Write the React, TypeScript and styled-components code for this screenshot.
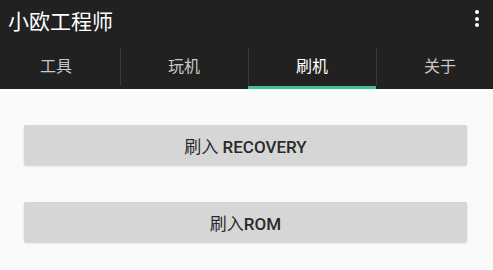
import React from 'react'
import styled, { createGlobalStyle } from 'styled-components'

const GlobalStyle = createGlobalStyle`
  html, body {
    margin: 0;
    padding: 0;
    background: #fafafa;
  }
  body {
    font-family: Roboto, "Noto Sans CJK SC", sans-serif;
  }
`

const tabs = ['工具', '玩机', '刷机', '关于']

const App = () => {
  const [active, setActive] = React.useState<number>(2)

  return (
    <Page>
      <GlobalStyle />
      <Header>
        <Toolbar>
          <Title>小欧工程师</Title>
          <Menu aria-label="更多">
            <Dot />
            <Dot />
            <Dot />
          </Menu>
        </Toolbar>
        <TabScroller>
          <TabBar>
            {tabs.map((t, i) => (
              <Tab key={t} active={i === active} divider={i > 0} onClick={() => setActive(i)}>
                {t}
              </Tab>
            ))}
          </TabBar>
        </TabScroller>
      </Header>

      <Content>
        <FlashButton>
          <Cjk>刷入</Cjk> RECOVERY
        </FlashButton>
        <FlashButton>
          <Cjk>刷入</Cjk>ROM
        </FlashButton>
      </Content>
    </Page>
  )
}

export default App

const Page = styled.div`
  width: 100%;
  min-height: 100vh;
  background: #fafafa;
`

const Header = styled.div`
  background: #212121;
`

const Toolbar = styled.div`
  height: 44px;
  display: flex;
  align-items: center;
  justify-content: space-between;
  padding: 0 14px 0 8px;
`

const Title = styled.div`
  color: #ffffff;
  font-size: 21px;
  margin-top: -4px;
`

const Menu = styled.div`
  display: flex;
  flex-direction: column;
  gap: 2.5px;
  margin-top: -7px;
  cursor: pointer;
`

const Dot = styled.span`
  width: 4px;
  height: 4px;
  border-radius: 50%;
  background: #ffffff;
`

const TabScroller = styled.div`
  overflow: hidden;
`

const TabBar = styled.div`
  height: 45px;
  margin-left: -8px;
  display: grid;
  grid-template-columns: repeat(4, 128px);
`

const Tab = styled.div<{ active: boolean; divider: boolean }>`
  position: relative;
  display: flex;
  align-items: center;
  justify-content: center;
  color: ${({ active }) => (active ? '#ffffff' : '#c8c8c8')};
  font-size: 16px;
  padding-bottom: 1px;
  cursor: pointer;
  border-bottom: 3px solid ${({ active }) => (active ? '#3fbf9b' : 'transparent')};
  box-sizing: border-box;

  &::before {
    content: '';
    display: ${({ divider }) => (divider ? 'block' : 'none')};
    position: absolute;
    left: 0;
    top: 4px;
    bottom: 0;
    width: 1px;
    background: #3a3a3a;
  }
`

const Content = styled.div`
  display: flex;
  flex-direction: column;
  gap: 37px;
  padding: 36px 26px 0 24px;
`

const FlashButton = styled.button`
  height: 40px;
  border: none;
  border-radius: 2px;
  background: #d6d6d6;
  box-shadow: 0 1px 2px rgba(0, 0, 0, 0.18);
  color: #2a2a2a;
  font-family: Roboto, "Noto Sans CJK SC", sans-serif;
  font-size: 17px;
  font-weight: 500;
  cursor: pointer;
`

const Cjk = styled.span`
  font-weight: 400;
`
